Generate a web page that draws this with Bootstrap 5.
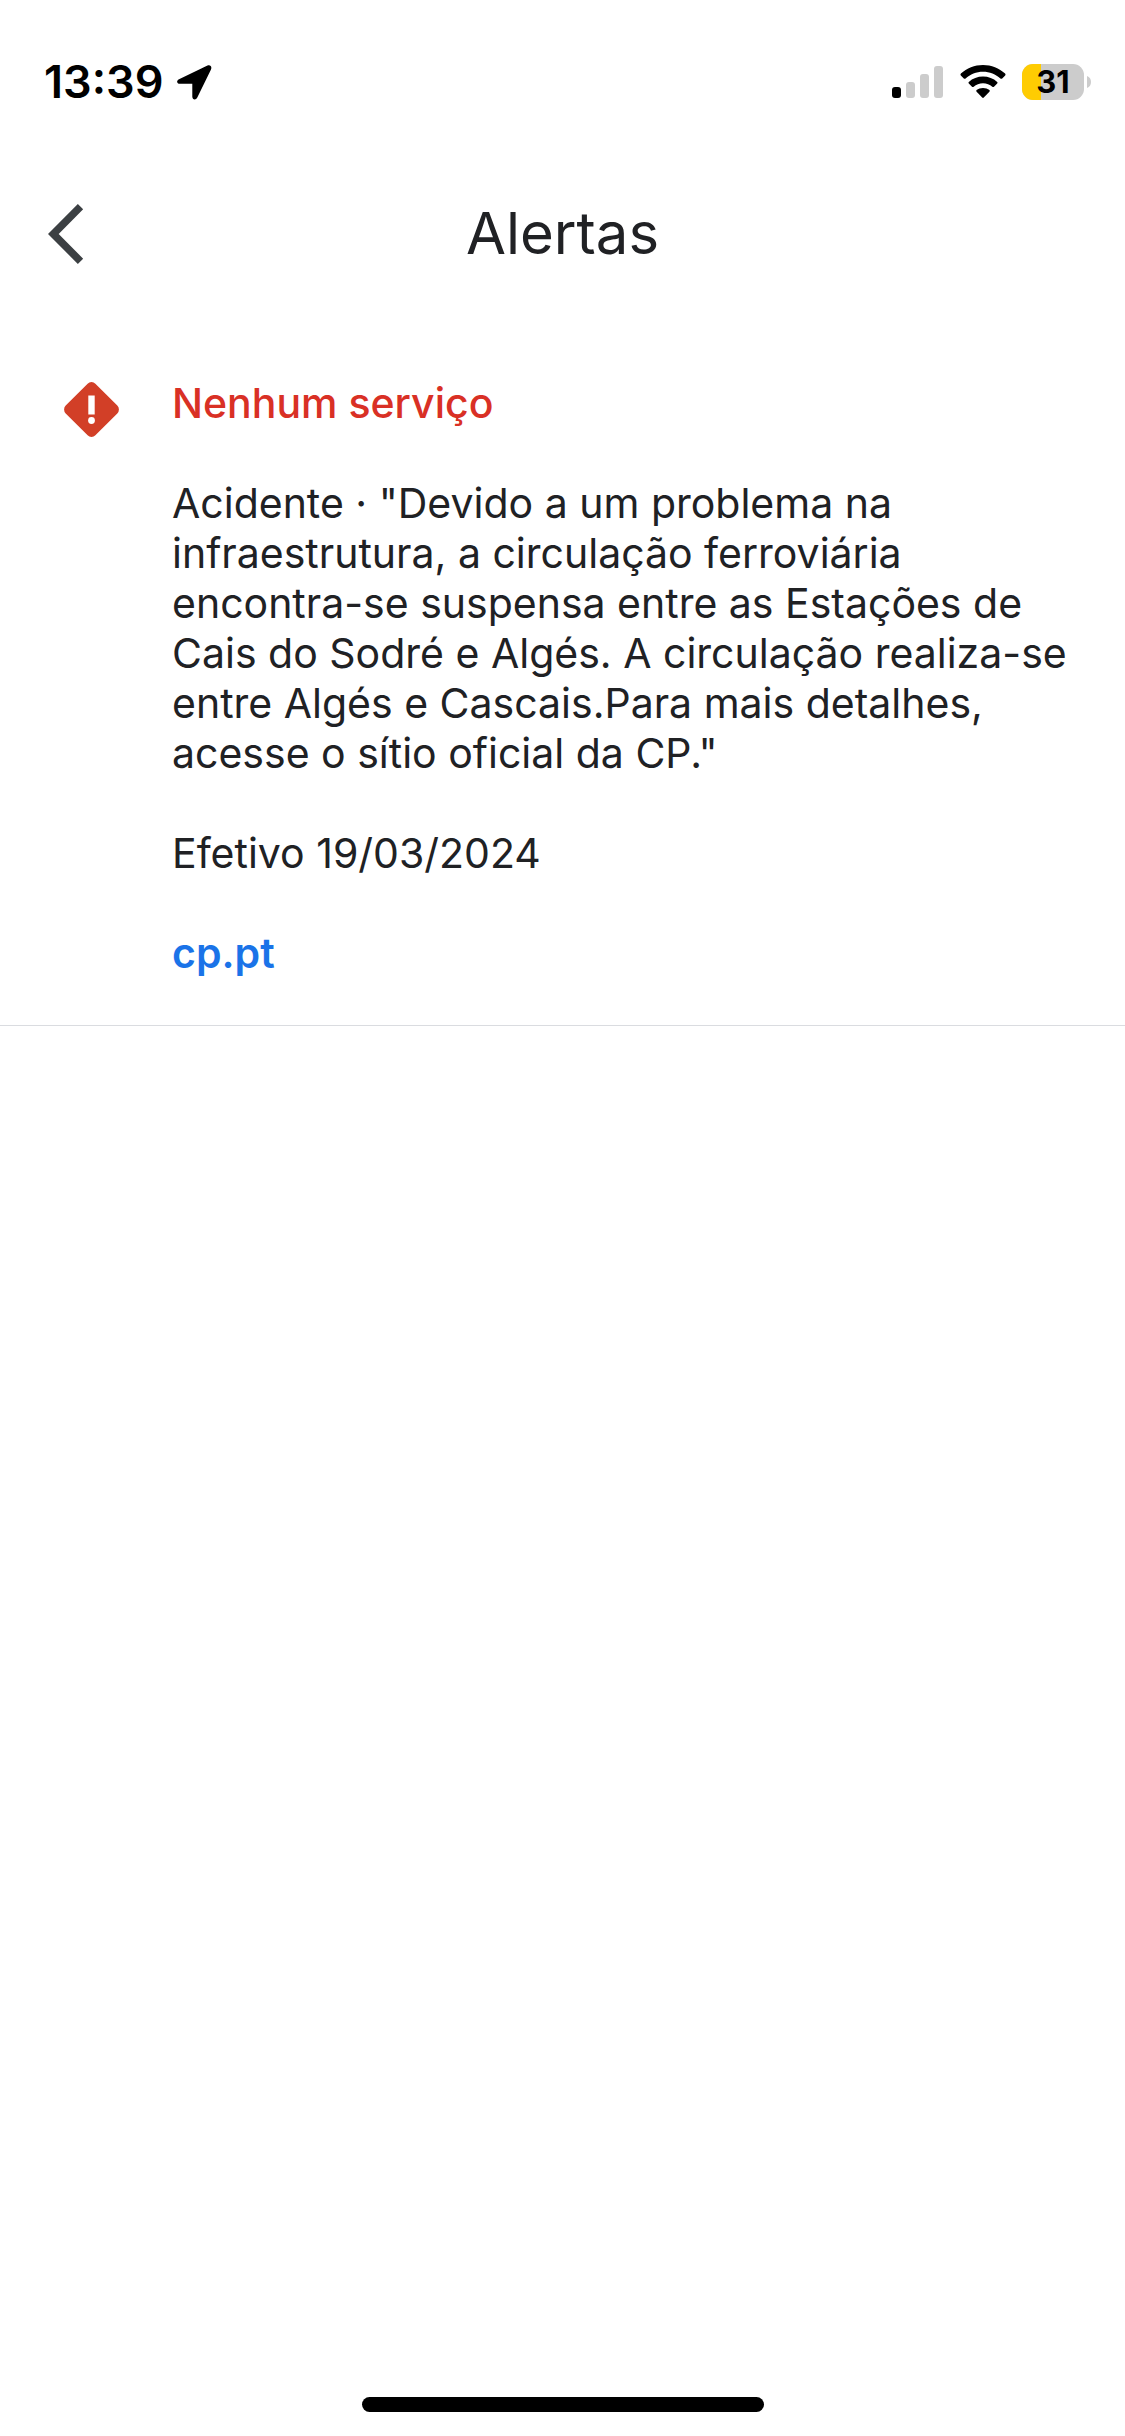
<!DOCTYPE html>
<html lang="pt">
<head>
<meta charset="utf-8">
<meta name="viewport" content="width=device-width, initial-scale=1">
<title>Alertas</title>
<link rel="stylesheet" href="https://cdn.jsdelivr.net/npm/bootstrap@5.3.0/dist/css/bootstrap.min.css">
<style>
  body { font-family: Inter, "Liberation Sans", sans-serif; font-size: 41px; line-height: 50px; color: #202124; background: #fff; }
  svg { display: block; flex: none; }
  .status-bar { padding: 57px 33px 57px 44px; color: #000; }
  .clock-group { gap: 14px; }
  .clock { font-size: 45px; font-weight: 600; }
  .status-icons { gap: 16px; }
  .battery { width: 70px; height: 36px; }
  .battery-level { font-size: 31px; line-height: 36px; font-weight: 700; width: 62px; }
  .app-bar { display: grid; grid-template-columns: 1fr auto 1fr; padding: 35px 48px; }
  .app-title { font-size: 58px; line-height: 68px; font-weight: 400; padding-bottom: 2px; }
  .alert-entry { padding: 74px 48px 47px 63px; gap: 52px; border-bottom: 1px solid #dadce0; }
  .alert-symbol { margin-top: 3px; }
  .alert-copy { display: flex; flex-direction: column; gap: 50px; }
  .alert-heading-text { font-size: 41px; line-height: 50px; font-weight: 500; color: #d93025; }
  .alert-url { color: #1a73e8; font-weight: 600; }
  .home-area { padding-bottom: 24px; }
  .home-bar { width: 402px; height: 15px; background: #000; }
</style>
</head>
<body class="min-vh-100 d-flex flex-column">
  <div class="status-bar d-flex align-items-center justify-content-between">
    <div class="clock-group d-flex align-items-center">
      <span class="clock">13:39</span>
      <svg width="35" height="35" viewBox="0 0 35 35" aria-hidden="true"><path d="M30.5 .6 2 14.2C-1 15.8-.2 18.7 3 18.7H15.300V31.500C15.300 35 19 35.300 20.300 32.500L34 4.500C35.200 1.600 33.200-.5 30.500 .6Z"/></svg>
    </div>
    <div class="status-icons d-flex align-items-center">
      <svg width="52" height="34" viewBox="0 0 52 34" aria-label="Sinal"><rect x="0" y="22" width="9" height="11" rx="3"/><g fill="#ccc"><rect x="14" y="17" width="9" height="16" rx="3"/><rect x="28" y="9" width="9" height="24" rx="3"/><rect x="42" y="1" width="9" height="32" rx="3"/></g></svg>
      <svg width="46" height="34" viewBox="0 0 46 34" aria-label="Wi-Fi"><path d="M23 0C14.600 0 6.800 3.200 .9 8.600Q0 9.500 .8 10.400L3.800 13.400Q4.700 14.200 5.600 13.400C10.200 9.200 16.300 6.700 23 6.700S35.800 9.200 40.400 13.400Q41.300 14.200 42.200 13.400L45.200 10.400Q46 9.500 45.100 8.600C39.200 3.200 31.400 0 23 0Z"/><path d="M23 11.500C17.600 11.500 12.600 13.500 8.800 16.900Q8 17.700 8.800 18.500L12 21.700Q12.800 22.400 13.700 21.700C16.200 19.500 19.400 18.200 23 18.200S29.800 19.500 32.300 21.700Q33.200 22.400 34 21.700L37.200 18.500Q38 17.700 37.200 16.900C33.400 13.500 28.400 11.500 23 11.500Z"/><path d="M23 23C20.500 23 18.300 23.800 16.600 25.100Q15.800 25.900 16.600 26.800L22.200 32.500Q23 33.300 23.800 32.500L29.400 26.800Q30.200 25.900 29.400 25.100C27.700 23.800 25.500 23 23 23Z"/></svg>
      <div class="battery position-relative">
        <svg width="70" height="36" viewBox="0 0 70 36" aria-hidden="true"><defs><clipPath id="cell"><rect width="62" height="36" rx="11"/></clipPath></defs><g clip-path="url(#cell)"><path fill="#ccc" d="M0 0H62V36H0Z"/><path fill="#ffcc02" d="M0 0H19V36H0Z"/></g><path fill="#ccc" d="M65 12Q69 13.500 69 18T65 24Z"/></svg>
        <span class="battery-level position-absolute top-0 start-0 text-center">31</span>
      </div>
    </div>
  </div>

  <header class="app-bar align-items-center">
    <button type="button" class="btn p-0 border-0 rounded-0 me-auto" aria-label="Voltar">
      <svg width="36" height="60" viewBox="0 0 36 60"><path d="M32.500 2.700 5.300 30 32.500 57.300" fill="none" stroke="#3c4043" stroke-width="7.500"/></svg>
    </button>
    <h1 class="app-title m-0">Alertas</h1>
  </header>

  <main class="flex-grow-1">
    <article class="alert-entry d-flex align-items-start">
      <svg class="alert-symbol" width="57" height="57" viewBox="0 0 57 57" aria-hidden="true"><rect x="7.500" y="7.500" width="42" height="42" rx="5.500" transform="rotate(45 28.500 28.500)" fill="#d23f27"/><path fill="#fff" d="M25.300 14.500H31.700V33.500H25.300Z"/><circle cx="28.500" cy="39.500" r="3.400" fill="#fff"/></svg>
      <div class="alert-copy">
        <h2 class="alert-heading-text m-0">Nenhum serviço</h2>
        <p class="m-0">Acidente · "Devido a um problema na infraestrutura, a circulação ferroviária encontra-se suspensa entre as Estações de Cais do Sodré e Algés. A circulação realiza-se entre Algés e Cascais.Para mais detalhes, acesse o sítio oficial da CP."</p>
        <p class="m-0">Efetivo 19/03/2024</p>
        <a class="alert-url text-decoration-none me-auto" href="#">cp.pt</a>
      </div>
    </article>
  </main>

  <div class="home-area d-flex justify-content-center"><div class="home-bar rounded-pill"></div></div>
  <script src="https://cdn.jsdelivr.net/npm/bootstrap@5.3.0/dist/js/bootstrap.bundle.min.js"></script>
</body>
</html>
